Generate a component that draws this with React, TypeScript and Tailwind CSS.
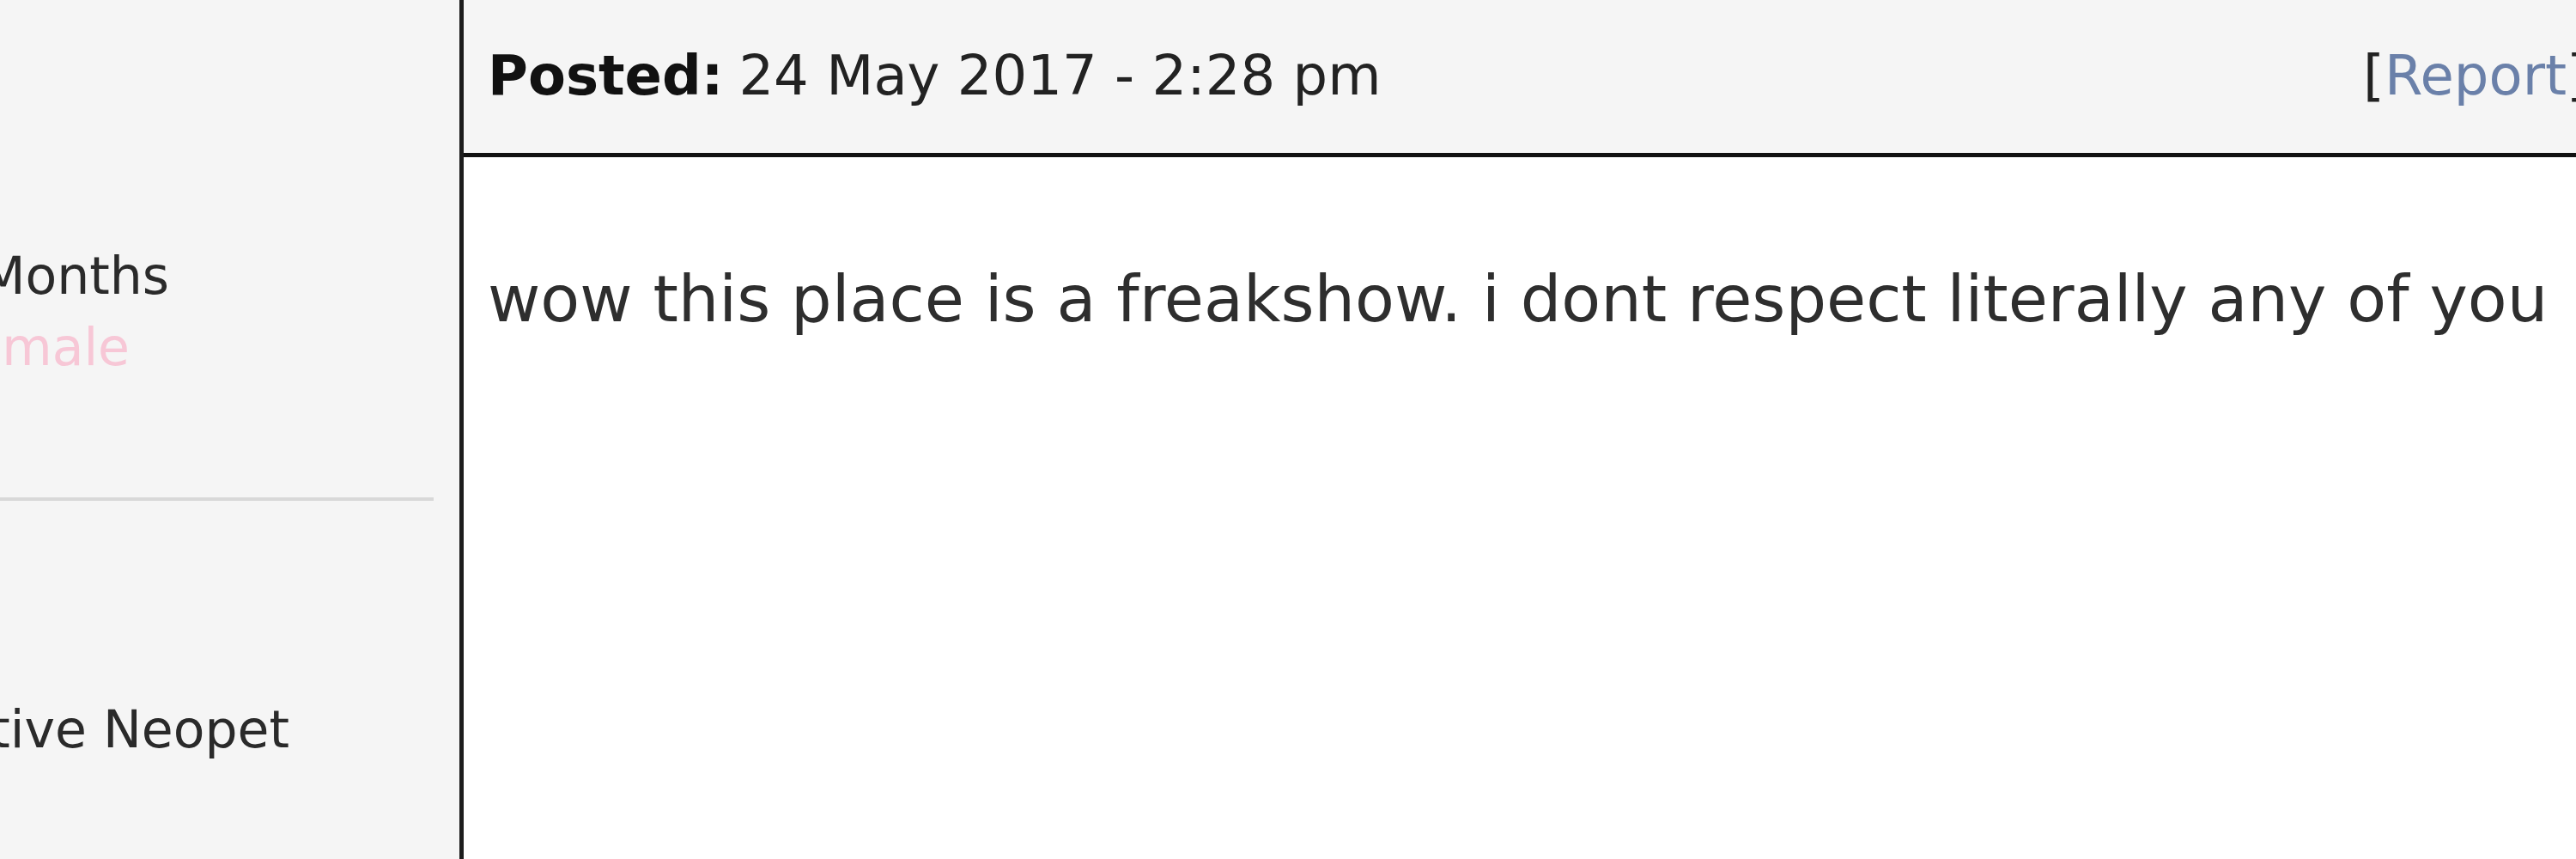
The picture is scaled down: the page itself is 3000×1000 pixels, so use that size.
import React from "react";

const font = { fontFamily: '"DejaVu Sans", Verdana, sans-serif' };

export default function App() {
  return (
    <div
      className="flex w-[3000px] h-[1000px] overflow-hidden bg-white text-[#2b2b2b]"
      style={font}
    >
      {/* Left user-info column */}
      <div className="w-[540px] shrink-0 bg-[#f5f5f5] border-r-[5px] border-[#1c1c1c] flex flex-col text-[60px] leading-[83px] text-[#2a2a2a]">
        <div className="h-[280px] shrink-0" />
        <div className="w-[197px] flex justify-end whitespace-nowrap">
          <span>Joined: 3 Months</span>
        </div>
        <div className="w-[151px] flex justify-end whitespace-nowrap text-[#f7c7d6]">
          <span>Gender: Female</span>
        </div>
        <div className="h-[133px] shrink-0" />
        <div className="w-[505px] h-[4px] shrink-0 bg-[#d8d8d8]" />
        <div className="h-[225px] shrink-0" />
        <div className="w-[337px] flex justify-end whitespace-nowrap">
          <span>Active Neopet</span>
        </div>
      </div>

      {/* Right post column */}
      <div className="flex-1 flex flex-col min-w-0">
        <div className="h-[183px] shrink-0 bg-[#f5f5f5] border-b-[5px] border-[#111] flex items-start pl-[28px] pt-[51px] text-[64px] leading-[74px] whitespace-nowrap">
          <span className="font-bold text-[#111]">Posted:</span>
          <span className="ml-[18px] text-[#222]">24 May 2017 - 2:28 pm</span>
          <span className="ml-auto mr-[-14px] text-[#222]">
            [<span className="text-[#6a80a9]">Report</span>]
          </span>
        </div>
        <div className="flex-1 bg-white pl-[28px] pt-[120px] text-[75px] leading-[90px] whitespace-nowrap text-[#2e2e2e]">
          wow this place is a freakshow. i dont respect literally any of you
        </div>
      </div>
    </div>
  );
}
